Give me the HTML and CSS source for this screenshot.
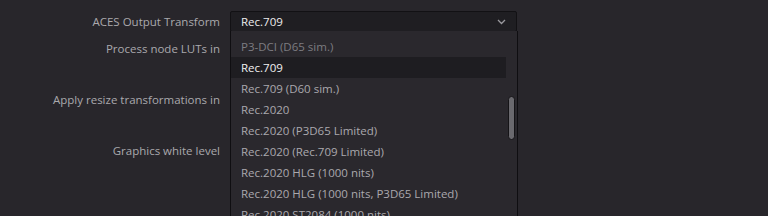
FILE: index.html
```html
<!DOCTYPE html>
<html lang="en">
<head>
  <meta charset="UTF-8" />
  <title>Color Management</title>
  <link rel="stylesheet" href="styles.css">
</head>
<body>

<div class="panel">
  <div class="row row-check">
    <div class="label"></div>
    <div class="control check-line">
      <span class="checkbox"></span>
      <span class="check-text">Apply ACES reference gamut compression</span>
    </div>
  </div>

  <div class="row row-output">
    <div class="label">ACES Output Transform</div>
    <div class="control">
      <div class="select">
        <span>Rec.709</span>
        <svg class="chevron" width="9" height="6" viewBox="0 0 9 6">
          <path d="M1 1 L4.5 4.5 L8 1" fill="none" stroke="#9a999e" stroke-width="1.3"/>
        </svg>
      </div>

      <ul class="menu">
        <li class="dim">P3-DCI (D65 sim.)</li>
        <li class="active">Rec.709</li>
        <li>Rec.709 (D60 sim.)</li>
        <li>Rec.2020</li>
        <li>Rec.2020 (P3D65 Limited)</li>
        <li>Rec.2020 (Rec.709 Limited)</li>
        <li>Rec.2020 HLG (1000 nits)</li>
        <li>Rec.2020 HLG (1000 nits, P3D65 Limited)</li>
        <li>Rec.2020 ST2084 (1000 nits)</li>
      </ul>
      <div class="scrollbar"></div>
    </div>
  </div>

  <div class="row row-luts">
    <div class="label">Process node LUTs in</div>
    <div class="control"></div>
  </div>

  <div class="row row-resize">
    <div class="label">Apply resize transformations in</div>
    <div class="control"></div>
  </div>

  <div class="row row-white">
    <div class="label">Graphics white level</div>
    <div class="control"></div>
  </div>
</div>

</body>
</html>
```

FILE: styles.css
```css
html {
  overflow: hidden;
}
body {
  margin: 0;
  min-height: 216px;
  background-color: #28262b;
  font-family: "Open Sans", "Noto Sans", sans-serif;
  font-size: 11.5px;
  color: #aaa9ad;
}
.panel {
  display: flex;
  flex-direction: column;
  margin-top: -8px;
}
.row {
  display: flex;
  align-items: center;
  gap: 10px;
}
.label {
  width: 220px;
  text-align: right;
  white-space: nowrap;
}
.control {
  width: 287px;
  position: relative;
}
.row-check {
  height: 14px;
}
.row-output {
  height: 30px;
}
.row-luts {
  height: 24px;
}
.row-resize {
  height: 78px;
}
.row-white {
  height: 24px;
}
.check-line {
  display: flex;
  align-items: center;
  gap: 6px;
  margin-top: -14px;
}
.checkbox {
  width: 10px;
  height: 10px;
  margin-left: 2px;
  margin-top: 3px;
  border: 1px solid #151417;
  border-radius: 2px;
  background: #1f1e22;
}
.select {
  height: 19px;
  display: flex;
  align-items: center;
  justify-content: space-between;
  padding: 0 10px 0 10px;
  background: #1f1e22;
  border: 1px solid #121114;
  border-radius: 2px;
  color: #ededed;
}
.chevron {
  margin-top: 2px;
}
.menu {
  position: absolute;
  top: 20px;
  left: 0;
  width: 286px;
  margin: 0;
  padding: 5px 0 0;
  list-style: none;
  background: #2a282d;
  border-left: 1px solid #0f0e11;
  border-right: 1px solid #0f0e11;
  z-index: 2;
}
.menu li {
  height: 21px;
  line-height: 21px;
  padding-left: 10px;
  margin-right: 11px;
  color: #aaa9ad;
  white-space: nowrap;
}
.menu li.dim {
  color: #7d7c81;
}
.menu li.active {
  background: #1e1d21;
  color: #f0f0f0;
}
.scrollbar {
  position: absolute;
  top: 85px;
  left: 278px;
  width: 5px;
  height: 42px;
  background: #6a696e;
  border: 1px solid #151417;
  border-radius: 4px;
  z-index: 3;
}
```
